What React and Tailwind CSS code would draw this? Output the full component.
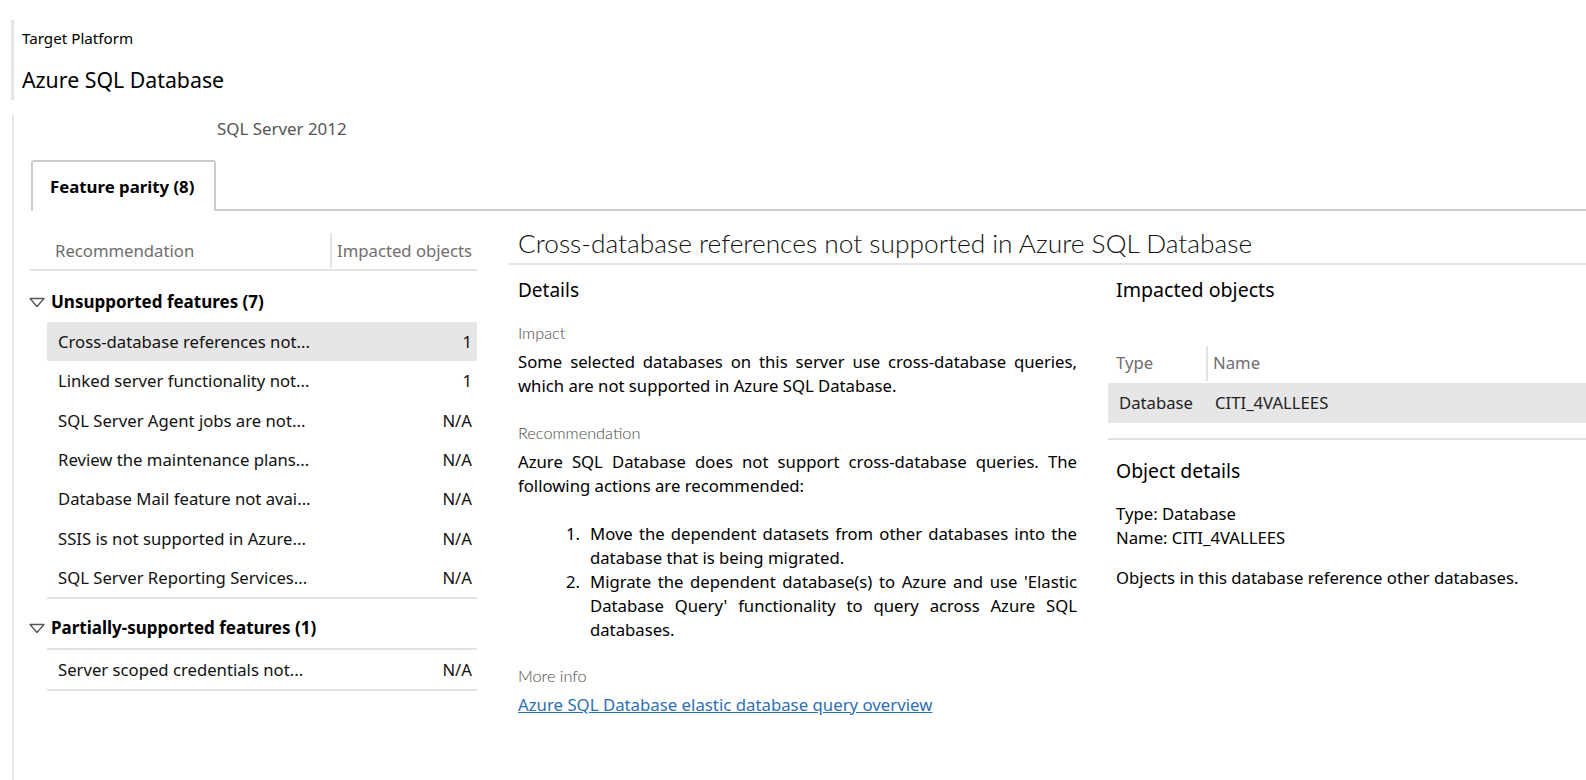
import React from "react";

const rows = [
  { name: "Cross-database references not...", count: "1", selected: true },
  { name: "Linked server functionality not...", count: "1" },
  { name: "SQL Server Agent jobs are not...", count: "N/A" },
  { name: "Review the maintenance plans...", count: "N/A" },
  { name: "Database Mail feature not avai...", count: "N/A" },
  { name: "SSIS is not supported in Azure...", count: "N/A" },
  { name: "SQL Server Reporting Services...", count: "N/A" },
];

const partial = [{ name: "Server scoped credentials not...", count: "N/A" }];

const light = { fontFamily: "Lato, sans-serif" };

const Caret = () => (
  <svg width="16" height="11" viewBox="0 0 16 11" className="shrink-0 -ml-[1px]">
    <path d="M1 1.5 L15 1.5 L8 9.5 Z" fill="none" stroke="#555" strokeWidth="1.3" strokeLinejoin="round" />
  </svg>
);

const Row = ({ row }) => (
  <div
    className={
      "flex items-center justify-between h-[39.3px] pl-[11px] pr-[5px] text-[16.7px] text-[#111] " +
      (row.selected ? "bg-[#e6e6e6]" : "")
    }
  >
    <span>{row.name}</span>
    <span>{row.count}</span>
  </div>
);

const GroupHeader = ({ label, top }) => (
  <div className={"flex items-center h-[40px] gap-[6px] " + top}>
    <Caret />
    <span className="font-bold text-[17px] text-black">{label}</span>
  </div>
);

const Label = ({ children, top }) => (
  <div className={"text-[16.3px] leading-[20px] text-[#4a4a4a] font-light " + top} style={light}>
    {children}
  </div>
);

export default function App() {
  return (
    <div
      className="w-[1586px] h-[780px] bg-white overflow-hidden text-black"
      style={{ fontFamily: '"Noto Sans", "Open Sans", sans-serif' }}
    >
      {/* target platform header */}
      <div className="ml-[11px] mt-[20px] h-[80px] border-l-[3px] border-[#e6e6e6] pl-[8px]">
        <div className="text-[15.2px] leading-[20px] pt-[8px]">Target Platform</div>
        <div className="text-[21.3px] leading-[28px] mt-[18px]">Azure SQL Database</div>
      </div>

      <div className="ml-[12px] mt-[15px] h-[665px] border-l-2 border-[#e6e6e6] pl-[1px]">
        <div className="pl-[202px] pt-[2px] h-[26px] text-[16.9px] leading-[24px] text-[#555]">SQL Server 2012</div>

        {/* tabs */}
        <div className="flex items-end mt-[19px]">
          <div className="w-[16px] border-b-2 border-transparent" />
          <div className="w-[185px] h-[51px] border-2 border-b-0 border-[#cccccc] rounded-t-[3px] flex items-center pl-[17px] font-bold text-[16.8px] bg-white">
            Feature parity (8)
          </div>
          <div className="flex-1 border-b-2 border-[#cccccc]" />
        </div>

        <div className="flex">
          {/* left list */}
          <div className="ml-[15px] w-[447px]">
            <div className="pt-[21px]">
              <div className="flex items-center h-[39px] border-b-2 border-[#e3e3e3] text-[16.7px] text-[#6e6e6e]">
                <div className="w-[300px] pl-[25px]">Recommendation</div>
                <div className="h-[35px] border-l-2 border-[#e3e3e3] pl-[5px] flex items-center">Impacted objects</div>
              </div>
            </div>

            <GroupHeader label="Unsupported features (7)" top="mt-[11px]" />
            <div className="ml-[17px] border-b-2 border-[#e3e3e3]">
              {rows.map((r) => (
                <Row key={r.name} row={r} />
              ))}
            </div>

            <GroupHeader label="Partially-supported features (1)" top="mt-[9px]" />
            <div className="ml-[17px] border-y-2 border-[#e3e3e3]">
              {partial.map((r) => (
                <Row key={r.name} row={r} />
              ))}
            </div>
          </div>

          {/* right detail pane */}
          <div className="flex-1 ml-[32px]">
            <div
              className="pt-[16px] pb-[4px] pl-[9px] border-b-2 border-[#e3e3e3] text-[26.3px] leading-[32px] font-light text-[#111]"
              style={light}
            >
              Cross-database references not supported in Azure SQL Database
            </div>

            <div className="flex">
              <div className="w-[559px] ml-[9px]">
                <div className="mt-[12px] text-[19px] leading-[26px]">Details</div>
                <Label top="mt-[20px]">Impact</Label>
                <p className="mt-[7px] text-[16.7px] leading-[24px] text-justify">
                  Some selected databases on this server use cross-database queries, which are not supported in Azure SQL Database.
                </p>
                <Label top="mt-[25px]">Recommendation</Label>
                <p className="mt-[7px] text-[16.7px] leading-[24px] text-justify">
                  Azure SQL Database does not support cross-database queries. The following actions are recommended:
                </p>
                <ol className="mt-[24px] text-[16.7px] leading-[24px] text-justify">
                  <li className="flex">
                    <span className="w-[72px] shrink-0 text-right pr-[10px]">1.</span>
                    <span>Move the dependent datasets from other databases into the database that is being migrated.</span>
                  </li>
                  <li className="flex">
                    <span className="w-[72px] shrink-0 text-right pr-[10px]">2.</span>
                    <span>
                      Migrate the dependent database(s) to Azure and use 'Elastic Database Query' functionality to query across Azure SQL databases.
                    </span>
                  </li>
                </ol>
                <Label top="mt-[24px]">More info</Label>
                <a href="#" className="block mt-[7px] text-[16.8px] leading-[24px] text-[#2e6fb3] underline">
                  Azure SQL Database elastic database query overview
                </a>
              </div>

              <div className="flex-1 ml-[31px]">
                <div className="mt-[12px] pl-[8px] text-[19.6px] leading-[26px]">Impacted objects</div>
                <div className="mt-[40px] flex items-center h-[40px] text-[16.7px] text-[#6e6e6e]">
                  <div className="w-[98px] pl-[8px]">Type</div>
                  <div className="h-[35px] border-l-2 border-[#e3e3e3] pl-[5px] flex items-center">Name</div>
                </div>
                <div className="flex items-center h-[40px] bg-[#e6e6e6] text-[16.7px] text-[#222]">
                  <div className="w-[107px] pl-[11px]">Database</div>
                  <div>CITI_4VALLEES</div>
                </div>
                <div className="mt-[15px] border-b-2 border-[#e3e3e3]" />
                <div className="pl-[8px]">
                  <div className="mt-[18px] text-[19.4px] leading-[26px]">Object details</div>
                  <div className="mt-[18px] text-[16.7px] leading-[24px]">
                    <div>Type: Database</div>
                    <div>Name: CITI_4VALLEES</div>
                  </div>
                  <div className="mt-[16px] text-[16.7px] leading-[24px]">Objects in this database reference other databases.</div>
                </div>
              </div>
            </div>
          </div>
        </div>
      </div>
    </div>
  );
}
